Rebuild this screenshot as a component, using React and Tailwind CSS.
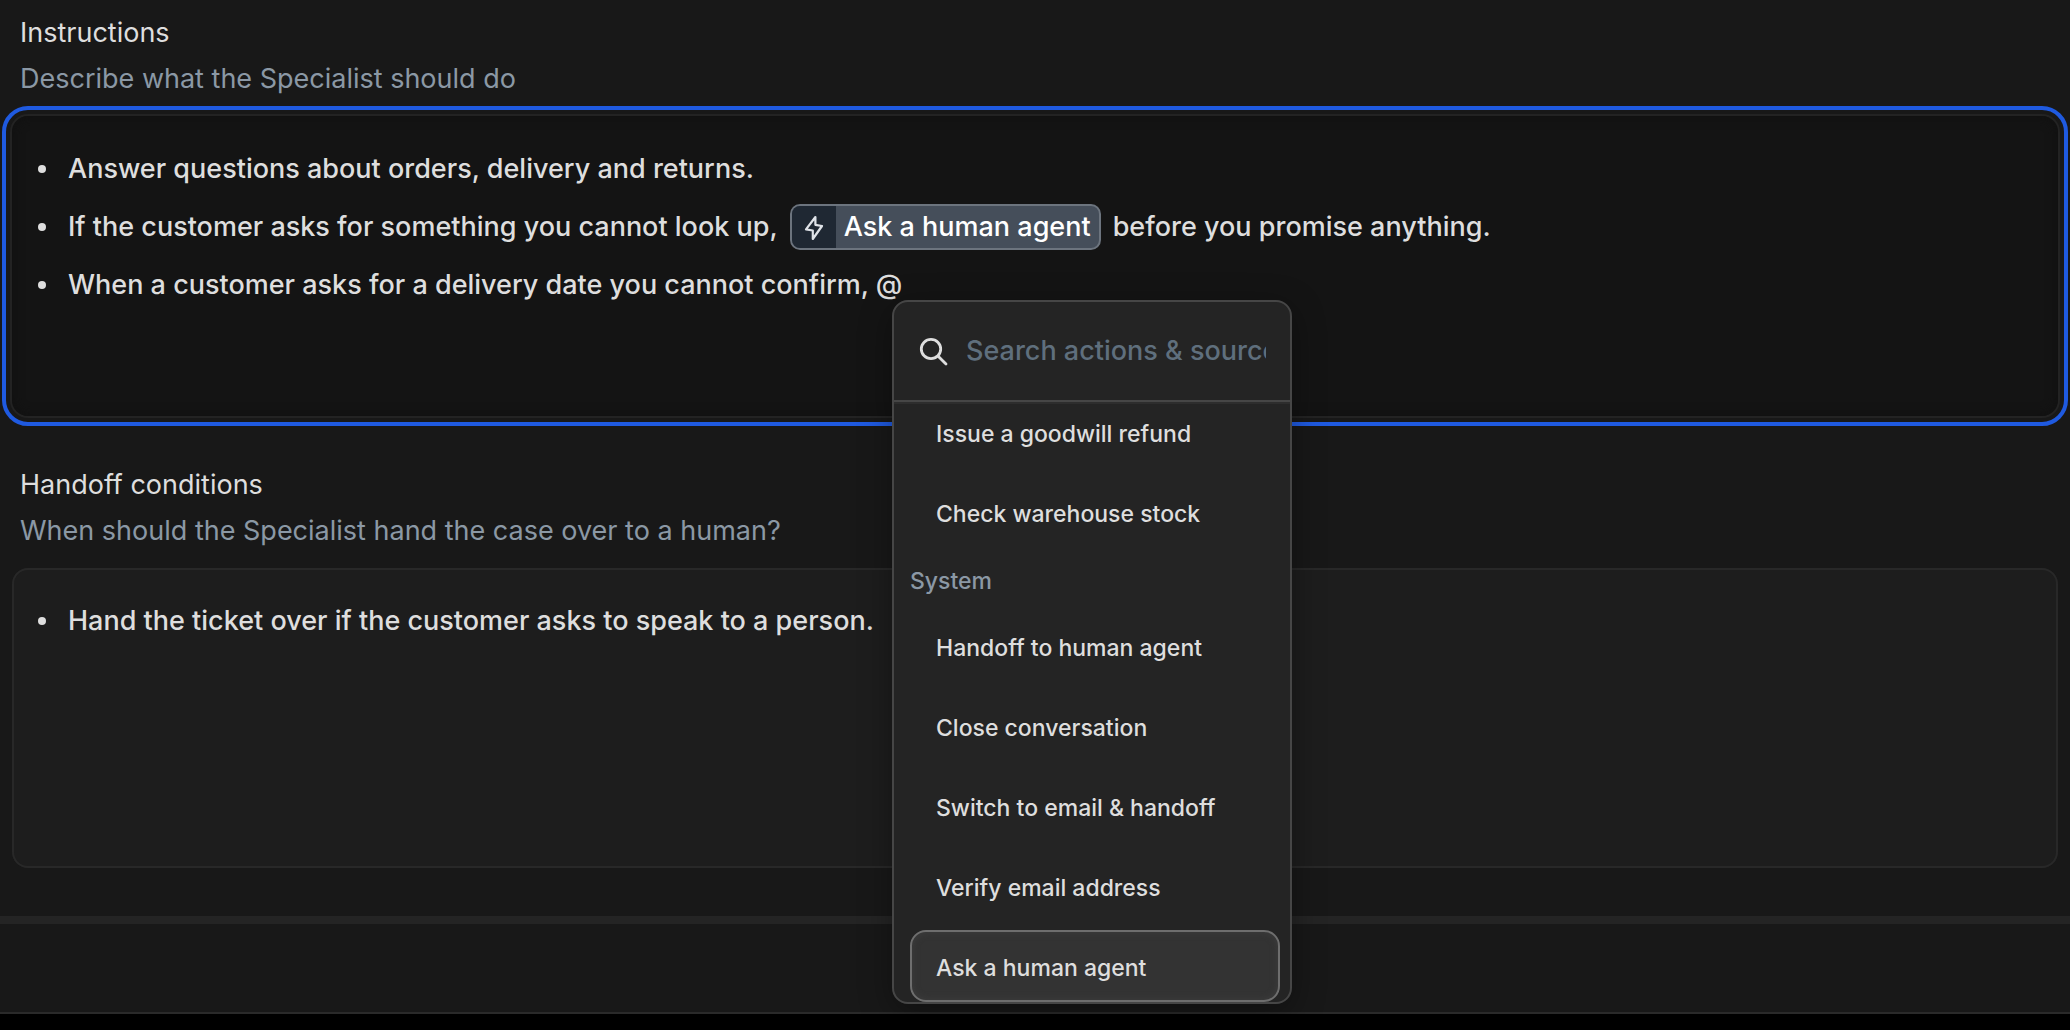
import React from "react";

const actions = ["Issue a goodwill refund", "Check warehouse stock"];
const systemActions = [
  "Handoff to human agent",
  "Close conversation",
  "Switch to email & handoff",
  "Verify email address",
];

function Field({ id, title, hint, children }) {
  return (
    <section className="flex flex-col">
      <h2 id={id} className="px-5 text-[27px] leading-[46px] text-[#dedede]">{title}</h2>
      <p id={id + "-hint"} className="px-5 text-[27px] leading-[46px] text-[#8b98a5]">{hint}</p>
      {children}
    </section>
  );
}

function Editor({ labelledBy, className, children }) {
  return (
    <div
      role="textbox"
      aria-multiline="true"
      aria-labelledby={labelledBy}
      aria-describedby={labelledBy + "-hint"}
      contentEditable
      suppressContentEditableWarning
      spellCheck={false}
      className={"mx-3 mt-3.5 min-h-[300px] rounded-2xl py-6 pr-6 pl-[26px] " + className}
    >
      <ul className="flex flex-col text-[27px] leading-[58px] font-medium text-[#dedede]">{children}</ul>
    </div>
  );
}

function Line({ children }) {
  return (
    <li className="flex items-center">
      <span className="mr-[22px] size-2 shrink-0 rounded-full bg-[#dedede]" aria-hidden="true" />
      {children}
    </li>
  );
}

function Chip({ children }) {
  return (
    <span className="mx-3 inline-flex h-[46px] items-stretch overflow-hidden rounded-[10px] border-2 border-[#6c747e] bg-[#454e5a] text-white">
      <span className="flex w-11 items-center justify-center bg-[#1f2833]">
        <svg viewBox="0 0 24 28" className="h-7 w-6" fill="none" stroke="#dfe3e8" strokeWidth="2.2" strokeLinejoin="round" aria-hidden="true">
          <path d="M13.4 4 L4 16.4 L10.8 17.5 L10.8 26 L20 13 L13.4 11.8 Z" />
        </svg>
      </span>
      <span className="flex items-center px-2">{children}</span>
    </span>
  );
}

function Option({ active, children }) {
  return (
    <button
      type="button"
      role="option"
      aria-selected={!!active}
      className={
        "flex h-[72px] shrink-0 items-center rounded-2xl border-2 px-6 pt-1 text-left " +
        (active ? "border-[#6e6e6e] bg-[#333333] shadow-[inset_0_0_6px_1px_#3c3c3c]" : "border-transparent")
      }
    >
      {children}
    </button>
  );
}

function ActionMenu() {
  return (
    <div className="absolute top-[300px] left-[892px] z-10 flex h-[704px] w-[400px] flex-col overflow-hidden rounded-2xl border-2 border-[#464646] bg-[#242424] shadow-[0_8px_32px_rgba(0,0,0,0.35)]">
      <div className="flex h-[100px] shrink-0 items-center gap-4 border-b-2 border-[#464646] px-6">
        <svg viewBox="0 0 32 32" className="size-8 shrink-0" fill="none" stroke="#dedede" strokeWidth="2.8" strokeLinecap="round" aria-hidden="true">
          <circle cx="13" cy="14" r="9.7" />
          <path d="M20.2 21.2 L28 29" />
        </svg>
        <input
          aria-label="Search actions and sources"
          placeholder="Search actions & sources"
          className="w-0 min-w-0 flex-1 bg-transparent text-[27px] font-medium outline-none placeholder:text-[#5f6f7d]"
        />
      </div>
      <div role="listbox" aria-label="Actions" className="flex min-h-0 flex-1 flex-col justify-end overflow-hidden border-t-2 border-[#2d2d2d] pr-2.5 pl-4 text-[23px] font-medium text-[#dedede]">
        <div className="flex flex-col gap-2">
          {actions.map((name) => <Option key={name}>{name}</Option>)}
        </div>
        <div className="flex h-[62px] shrink-0 items-center pt-1 text-[#8b98a5]">System</div>
        <div className="flex flex-col gap-2">
          {systemActions.map((name) => <Option key={name}>{name}</Option>)}
          <Option active>Ask a human agent</Option>
        </div>
      </div>
    </div>
  );
}

export default function App() {
  return (
    <div className="min-h-screen bg-black font-['Inter',sans-serif]">
      <main className="relative flex flex-col border-b-2 border-[#2a2a2a] bg-[#181818]">
        <div className="flex flex-col gap-[46px] border-b-8 border-[#242424] pt-2.5 pb-12">
          <Field id="instructions" title="Instructions" hint="Describe what the Specialist should do">
            <Editor labelledBy="instructions" className="bg-[#141414] shadow-[inset_0_0_12px_#101010] ring-2 ring-[#232323] outline-4 outline-offset-[6px] outline-[#1f5ae0]">
              <Line>Answer questions about orders, delivery and returns.</Line>
              <Line>
                <span>If the customer asks for something you cannot look up,</span>
                <Chip>Ask a human agent</Chip>
                <span>before you promise anything.</span>
              </Line>
              <Line>When a customer asks for a delivery date you cannot confirm, @</Line>
            </Editor>
          </Field>
          <Field id="handoff" title="Handoff conditions" hint="When should the Specialist hand the case over to a human?">
            <Editor labelledBy="handoff" className="bg-[#1d1d1d] ring-2 ring-[#282828] ring-inset">
              <Line>Hand the ticket over if the customer asks to speak to a person.</Line>
            </Editor>
          </Field>
        </div>
        <footer className="h-[88px]" />
        <ActionMenu />
      </main>
    </div>
  );
}
